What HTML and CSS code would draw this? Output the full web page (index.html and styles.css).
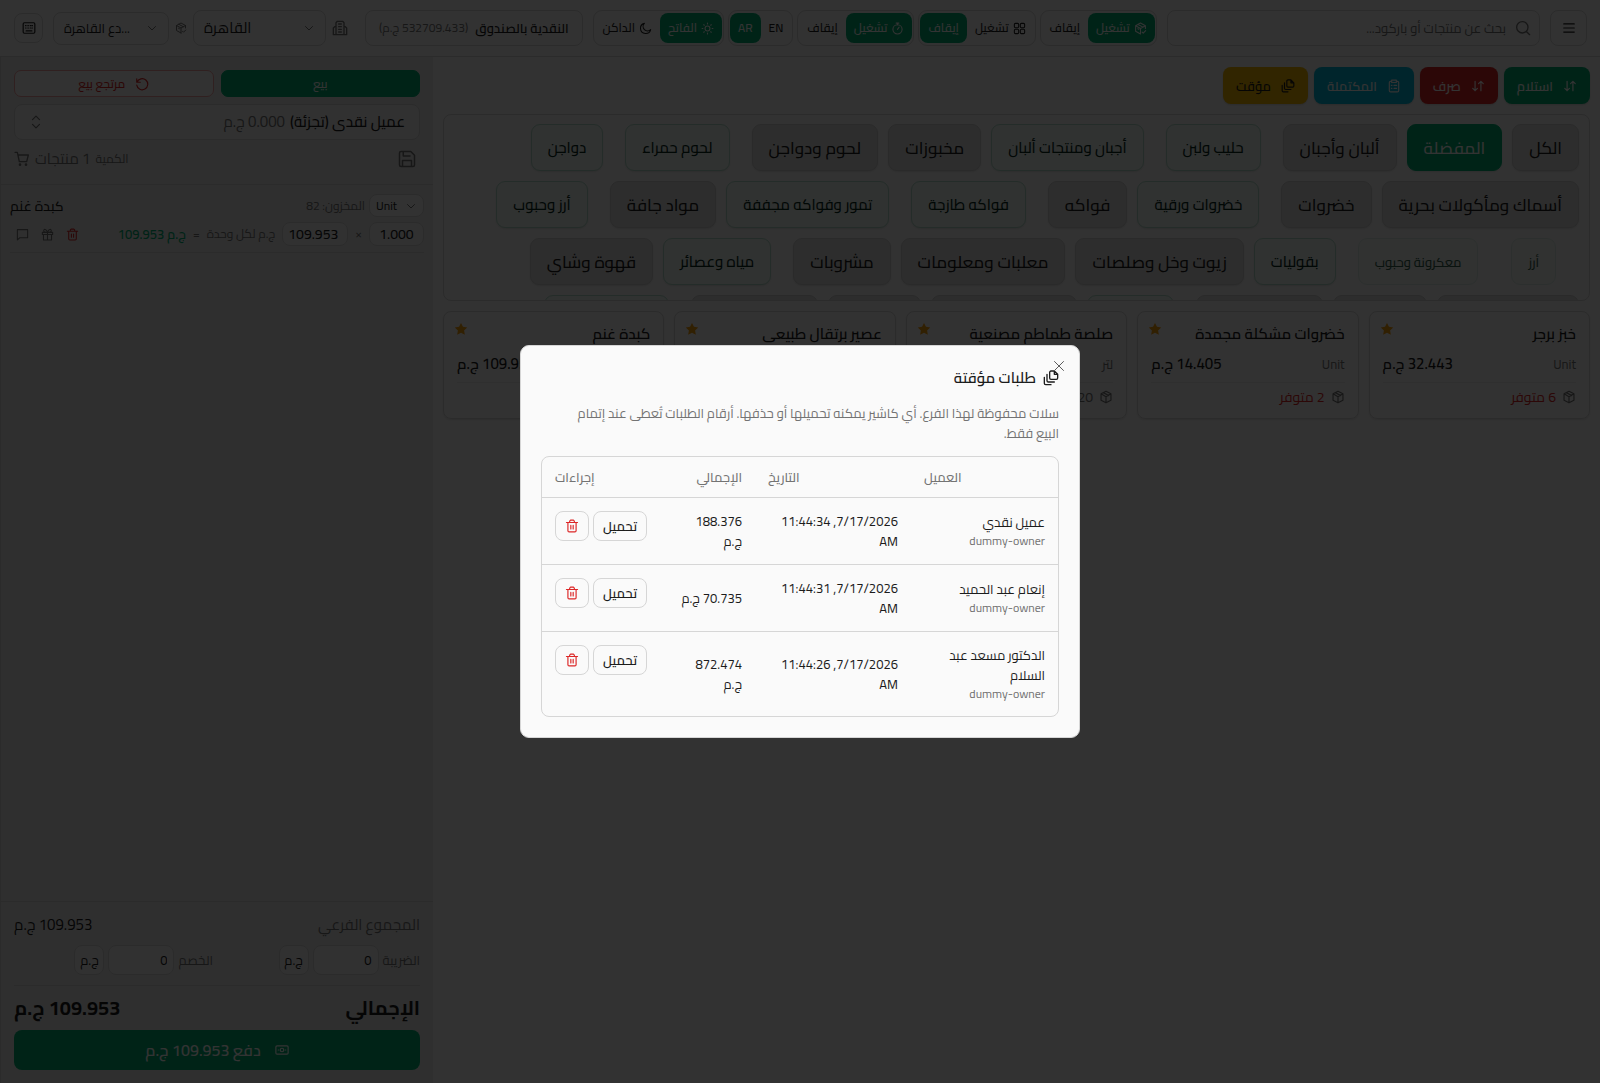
FILE: index.html
```
<!DOCTYPE html>
<html lang="ar" dir="rtl">
<head>
  <meta charset="UTF-8">
  <meta name="viewport" content="width=device-width, initial-scale=1.0">
  <title>نقطة البيع</title>
  <link rel="stylesheet" href="styles.css">
</head>
<body>
  <!-- Icon sprite -->
  <svg class="sprite" aria-hidden="true">
    <symbol id="i-menu" viewBox="0 0 24 24"><path d="M3 5h18M3 12h18M3 19h18"/></symbol>
    <symbol id="i-search" viewBox="0 0 24 24"><circle cx="11" cy="11" r="8.5"/><path d="m17.5 17.5 4.5 4.5"/></symbol>
    <symbol id="i-box" viewBox="0 0 24 24"><path d="M12 2 20.5 6.5v11L12 22l-8.500-4.500v-11zM3.500 6.500 12 11.500l8.500-5M12 11.500V22M7.500 4.500l9 5"/></symbol>
    <symbol id="i-box-check" viewBox="0 0 24 24"><path d="M21 12V7l-9-5-9 5v10l9 5M3 7l9 5 9-5M12 12v10M7.500 4.500l9 5M7 12.500l2 1M15 18.500l2 2 4.500-4.500"/></symbol>
    <symbol id="i-grid" viewBox="0 0 24 24"><rect x="2.500" y="2.500" width="8" height="8" rx="2"/><rect x="13.500" y="2.500" width="8" height="8" rx="2"/><rect x="2.500" y="13.500" width="8" height="8" rx="2"/><rect x="13.500" y="13.500" width="8" height="8" rx="2"/></symbol>
    <symbol id="i-timer" viewBox="0 0 24 24"><circle cx="12" cy="13.500" r="8.500"/><path d="M9.500 2h5M12 2v3M12 13.500l3-4"/></symbol>
    <symbol id="i-sun" viewBox="0 0 24 24"><circle cx="12" cy="12" r="4.500"/><path d="M12 2v1.500M12 20.500V22M2 12h1.500M20.500 12H22M5 5l1 1M18 18l1 1M19 5l-1 1M6 18l-1 1"/></symbol>
    <symbol id="i-moon" viewBox="0 0 24 24"><path d="M21.500 14A9.500 9.500 0 1 1 10 2.500 7.500 7.500 0 0 0 21.500 14z"/></symbol>
    <symbol id="i-building" viewBox="0 0 24 24"><path d="M6 22V4l2-2h8l2 2v18M2 22h20M6 10H4l-2 2v10M18 10h2l2 2v10M10 6h4M10 10h4M10 14h4M10 18h4"/></symbol>
    <symbol id="i-keyboard" viewBox="0 0 24 24"><rect x="2" y="3" width="20" height="18" rx="2"/><path d="M6 8h1M10 8h1M14 8h1M17 8h1M6 12h1M10 12h1M14 12h1M17 12h1M7 17h10"/></symbol>
    <symbol id="i-down" viewBox="0 0 24 24"><path d="m5 9 7 7 7-7"/></symbol>
    <symbol id="i-updown" viewBox="0 0 24 24"><path d="m6 8 6-6 6 6M6 16l6 6 6-6"/></symbol>
    <symbol id="i-arrows" viewBox="0 0 24 24"><path d="M7 4v16M3 16l4 4 4-4M17 20V4M13 8l4-4 4 4"/></symbol>
    <symbol id="i-clipboard" viewBox="0 0 24 24"><path d="M8 4H6a2 2 0 0 0-2 2v14a2 2 0 0 0 2 2h12a2 2 0 0 0 2-2V6a2 2 0 0 0-2-2h-2M8 2h8v4H8zM12 11h4.500M12 16h4.500M7.500 11h1M7.500 16h1"/></symbol>
    <symbol id="i-files" viewBox="0 0 24 24"><path d="M17 1.500h-5a2 2 0 0 0-2 2V12a2 2 0 0 0 2 2h8a2 2 0 0 0 2-2V6.500zM17 1.500v5h5M6 6.500V16a2 2 0 0 0 2 2h9M2 11v9a2 2 0 0 0 2 2h8"/></symbol>
    <symbol id="i-undo" viewBox="0 0 24 24"><path d="M3 3v6h6M3.500 9A9.500 9.500 0 1 1 3 14"/></symbol>
    <symbol id="i-save" viewBox="0 0 24 24"><path d="M4 2h13l5 5v13a2 2 0 0 1-2 2H4a2 2 0 0 1-2-2V4a2 2 0 0 1 2-2zM7 2v6h9M6 22v-8h12v8"/></symbol>
    <symbol id="i-cart" viewBox="0 0 24 24"><path d="M1.500 2H5l3 14h11l2.500-10H6"/><circle cx="9" cy="20.500" r="1"/><circle cx="18" cy="20.500" r="1"/></symbol>
    <symbol id="i-trash" viewBox="0 0 24 24"><path d="M2.500 6h19M5 6v14a2 2 0 0 0 2 2h10a2 2 0 0 0 2-2V6M8 6V3.500L9.500 2h5L16 3.500V6M10 11v6M14 11v6"/></symbol>
    <symbol id="i-gift" viewBox="0 0 24 24"><path d="M2.500 8h19v4h-19zM4.500 12v10h15V12M12 8v14M12 8C10 2 5 1 5 5c0 2 2 3 7 3M12 8c2-6 7-7 7-3 0 2-2 3-7 3"/></symbol>
    <symbol id="i-note" viewBox="0 0 24 24"><path d="M2.500 3h19v15H7l-4.500 4z"/></symbol>
    <symbol id="i-cash" viewBox="0 0 24 24"><rect x="1.500" y="5" width="21" height="14" rx="2"/><circle cx="12" cy="12" r="3"/><path d="M5.500 12h1M17.500 12h1"/></symbol>
    <symbol id="i-star" viewBox="0 0 24 24"><path d="m12 1.500 3.300 6.700 7.400 1.100-5.400 5.200 1.300 7.400-6.600-3.500-6.600 3.500 1.300-7.400L1.300 9.300l7.400-1.100z"/></symbol>
    <symbol id="i-close" viewBox="0 0 24 24"><path d="m3 3 18 18M21 3 3 21"/></symbol>
  </svg>

  <div class="app">
    <header class="topbar">
      <button class="icon-btn" type="button" aria-label="القائمة"><svg class="icon"><use href="#i-menu"/></svg></button>
      <label class="search">
        <svg class="icon icon-lg"><use href="#i-search"/></svg>
        <input type="search" aria-label="بحث" placeholder="بحث عن منتجات أو باركود...">
      </label>
      <div class="toggles">
        <div class="toggle">
          <button class="on" type="button"><svg class="icon"><use href="#i-box-check"/></svg>تشغيل</button>
          <button type="button">إيقاف</button>
        </div>
        <div class="toggle">
          <button type="button"><svg class="icon"><use href="#i-grid"/></svg>تشغيل</button>
          <button class="on" type="button">إيقاف</button>
        </div>
        <div class="toggle">
          <button class="on" type="button"><svg class="icon"><use href="#i-timer"/></svg>تشغيل</button>
          <button type="button">إيقاف</button>
        </div>
        <div class="toggle">
          <button type="button">EN</button>
          <button class="on" type="button">AR</button>
        </div>
        <div class="toggle">
          <button class="on" type="button"><svg class="icon"><use href="#i-sun"/></svg>الفاتح</button>
          <button type="button"><svg class="icon"><use href="#i-moon"/></svg>الداكن</button>
        </div>
      </div>
      <div class="cash"><strong>النقدية بالصندوق</strong><span>(532709.433 ج.م)</span></div>
      <div class="places">
        <svg class="icon icon-lg"><use href="#i-building"/></svg>
        <div class="select branch" dir="ltr">
          <select aria-label="الفرع"><option>القاهرة</option></select>
          <svg class="icon icon-sm"><use href="#i-down"/></svg>
        </div>
        <svg class="icon icon-sm"><use href="#i-box-check"/></svg>
        <div class="select store" dir="ltr">
          <select aria-label="المستودع"><option>&rlm;...دع القاهرة</option></select>
          <svg class="icon icon-sm"><use href="#i-down"/></svg>
        </div>
      </div>
      <button class="icon-btn small" type="button" aria-label="لوحة المفاتيح"><svg class="icon"><use href="#i-keyboard"/></svg></button>
    </header>

    <div class="workspace">
      <main class="catalog">
        <div class="actions">
          <button class="action green" type="button"><svg class="icon"><use href="#i-arrows"/></svg>استلام</button>
          <button class="action red" type="button"><svg class="icon"><use href="#i-arrows"/></svg>صرف</button>
          <button class="action cyan" type="button"><svg class="icon"><use href="#i-clipboard"/></svg>المكتملة</button>
          <button class="action yellow" type="button"><svg class="icon"><use href="#i-files"/></svg>مؤقت</button>
        </div>

        <div class="categories">
          <button class="chip" type="button">الكل</button>
          <button class="chip active" type="button">المفضلة</button>
          <button class="chip" type="button">ألبان وأجبان</button>
          <button class="chip sub" type="button">حليب ولبن</button>
          <button class="chip sub" type="button">أجبان ومنتجات ألبان</button>
          <button class="chip" type="button">مخبوزات</button>
          <button class="chip" type="button">لحوم ودواجن</button>
          <button class="chip sub" type="button">لحوم حمراء</button>
          <button class="chip sub" type="button">دواجن</button>
          <button class="chip" type="button">أسماك ومأكولات بحرية</button>
          <button class="chip" type="button">خضروات</button>
          <button class="chip sub" type="button">خضروات ورقية</button>
          <button class="chip" type="button">فواكه</button>
          <button class="chip sub" type="button">فواكه طازجة</button>
          <button class="chip sub" type="button">تمور وفواكه مجففة</button>
          <button class="chip" type="button">مواد جافة</button>
          <button class="chip sub" type="button">أرز وحبوب</button>
          <button class="chip leaf" type="button">أرز</button>
          <button class="chip leaf" type="button">معكرونة وحبوب</button>
          <button class="chip sub" type="button">بقوليات</button>
          <button class="chip" type="button">زيوت وخل وصلصات</button>
          <button class="chip" type="button">معلبات ومعلومات</button>
          <button class="chip" type="button">مشروبات</button>
          <button class="chip sub" type="button">مياه وعصائر</button>
          <button class="chip" type="button">قهوة وشاي</button>
          <button class="chip" type="button">حلويات وسكاكر</button>
          <button class="chip" type="button">مكسرات</button>
          <button class="chip" type="button">بهارات وتوابل</button>
          <button class="chip sub" type="button">مجمدات</button>
          <button class="chip" type="button">خضروات مجمدة</button>
          <button class="chip" type="button">منظفات</button>
          <button class="chip" type="button">عناية شخصية</button>
          <button class="chip sub" type="button">شامبو وصابون</button>
        </div>

        <div class="products">
          <article class="product">
            <svg class="star"><use href="#i-star"/></svg>
            <h3>خبز برجر</h3>
            <div class="price"><span>Unit</span><strong>32.443 ج.م</strong></div>
            <div class="stock low"><svg class="icon"><use href="#i-box"/></svg>6 متوفر</div>
          </article>
          <article class="product">
            <svg class="star"><use href="#i-star"/></svg>
            <h3>خضروات مشكلة مجمدة</h3>
            <div class="price"><span>Unit</span><strong>14.405 ج.م</strong></div>
            <div class="stock low"><svg class="icon"><use href="#i-box"/></svg>2 متوفر</div>
          </article>
          <article class="product">
            <svg class="star"><use href="#i-star"/></svg>
            <h3>صلصة طماطم مصنعية</h3>
            <div class="price"><span>لتر</span><strong>18.250 ج.م</strong></div>
            <div class="stock"><svg class="icon"><use href="#i-box"/></svg>20 متوفر</div>
          </article>
          <article class="product">
            <svg class="star"><use href="#i-star"/></svg>
            <h3>عصير برتقال طبيعى</h3>
            <div class="price"><span>لتر</span><strong>24.100 ج.م</strong></div>
            <div class="stock"><svg class="icon"><use href="#i-box"/></svg>35 متوفر</div>
          </article>
          <article class="product">
            <svg class="star"><use href="#i-star"/></svg>
            <h3>كبدة غنم</h3>
            <div class="price"><span>Unit</span><strong>109.953 ج.م</strong></div>
            <div class="stock"><svg class="icon"><use href="#i-box"/></svg>82 متوفر</div>
          </article>
        </div>
      </main>

      <aside class="cart">
        <div class="cart-head">
          <div class="modes">
            <button class="mode sale" type="button">بيع</button>
            <button class="mode refund" type="button"><svg class="icon"><use href="#i-undo"/></svg>مرتجع بيع</button>
          </div>
          <button class="customer" type="button">
            <span>عميل نقدى (تجزئة)</span><span class="muted">0.000 ج.م</span>
            <svg class="icon"><use href="#i-updown"/></svg>
          </button>
          <div class="cart-info">
            <button class="plain" type="button" aria-label="حفظ"><svg class="icon icon-xl"><use href="#i-save"/></svg></button>
            <div class="count"><small>الكمية</small><span>1 منتجات</span><svg class="icon icon-lg"><use href="#i-cart"/></svg></div>
          </div>
        </div>

        <div class="lines">
          <div class="line">
            <div class="line-top">
              <div class="select unit" dir="ltr">
                <select aria-label="الوحدة"><option>Unit</option></select>
                <svg class="icon icon-sm"><use href="#i-down"/></svg>
              </div>
              <span class="muted">المخزون: 82</span>
              <strong>كبدة غنم</strong>
            </div>
            <div class="line-bottom">
              <input class="qty" type="text" value="1.000" aria-label="الكمية">
              <span>×</span>
              <input class="unit-price" type="text" dir="ltr" value="109.953" aria-label="سعر الوحدة">
              <span>ج.م لكل وحدة</span>
              <span>=</span>
              <span class="line-total">ج.م 109.953</span>
              <div class="line-tools">
                <button class="plain danger" type="button" aria-label="حذف"><svg class="icon"><use href="#i-trash"/></svg></button>
                <button class="plain" type="button" aria-label="هدية"><svg class="icon"><use href="#i-gift"/></svg></button>
                <button class="plain" type="button" aria-label="ملاحظة"><svg class="icon"><use href="#i-note"/></svg></button>
              </div>
            </div>
          </div>
        </div>

        <div class="summary">
          <div class="subtotal"><span class="muted">المجموع الفرعي</span><span>109.953 ج.م</span></div>
          <div class="adjust">
            <div class="field">
              <label for="tax">الضريبة</label>
              <input id="tax" type="text" dir="ltr" value="0">
              <button type="button">ج.م</button>
            </div>
            <div class="field">
              <label for="discount">الخصم</label>
              <input id="discount" type="text" dir="ltr" value="0">
              <button type="button">ج.م</button>
            </div>
          </div>
          <div class="total"><span>الإجمالي</span><span>109.953 ج.م</span></div>
          <button class="pay" type="button"><svg class="icon"><use href="#i-cash"/></svg>دفع 109.953 ج.م</button>
        </div>
      </aside>
    </div>
  </div>

  <div class="overlay">
    <div class="dialog" role="dialog" aria-modal="true" aria-labelledby="dialog-title">
      <button class="close" type="button" aria-label="إغلاق"><svg class="icon icon-sm"><use href="#i-close"/></svg></button>
      <h2 id="dialog-title"><svg class="icon icon-lg"><use href="#i-files"/></svg>طلبات مؤقتة</h2>
      <p>سلات محفوظة لهذا الفرع. أي كاشير يمكنه تحميلها أو حذفها. أرقام الطلبات تُعطى عند إتمام البيع فقط.</p>
      <div class="table-box">
        <table>
          <thead>
            <tr>
              <th class="col-customer">العميل</th>
              <th class="col-date">التاريخ</th>
              <th class="col-total">الإجمالي</th>
              <th class="col-actions">إجراءات</th>
            </tr>
          </thead>
          <tbody>
            <tr>
              <td>عميل نقدي<small>dummy-owner</small></td>
              <td>7/17/2026, 11:44:34 AM</td>
              <td>188.376 ج.م</td>
              <td class="row-actions">
                <div>
                  <button type="button">تحميل</button>
                  <button class="danger" type="button" aria-label="حذف"><svg class="icon"><use href="#i-trash"/></svg></button>
                </div>
              </td>
            </tr>
            <tr>
              <td>إنعام عبد الحميد<small>dummy-owner</small></td>
              <td>7/17/2026, 11:44:31 AM</td>
              <td>70.735 ج.م</td>
              <td class="row-actions">
                <div>
                  <button type="button">تحميل</button>
                  <button class="danger" type="button" aria-label="حذف"><svg class="icon"><use href="#i-trash"/></svg></button>
                </div>
              </td>
            </tr>
            <tr>
              <td>الدكتور مسعد عبد السلام<small>dummy-owner</small></td>
              <td>7/17/2026, 11:44:26 AM</td>
              <td>872.474 ج.م</td>
              <td class="row-actions">
                <div>
                  <button type="button">تحميل</button>
                  <button class="danger" type="button" aria-label="حذف"><svg class="icon"><use href="#i-trash"/></svg></button>
                </div>
              </td>
            </tr>
          </tbody>
        </table>
      </div>
    </div>
  </div>
</body>
</html>
```
FILE: styles.css
```
:root {
  --bg: #fafafa;
  --panel: #ebebeb;
  --border: #d6d6d6;
  --text: #1c1c1c;
  --muted: #737373;
  --green: #00b074;
  --red: #dc2626;
}

* {
  box-sizing: border-box;
}

body {
  margin: 0;
  background: var(--bg);
  color: var(--text);
  font-family: Cairo, "DejaVu Sans", sans-serif;
  font-size: 13px;
  line-height: 20px;
}

button, input, select {
  font: inherit;
  color: inherit;
  margin: 0;
}

button {
  display: inline-flex;
  align-items: center;
  justify-content: center;
  padding: 0;
  white-space: nowrap;
}

h2, h3, p {
  margin: 0;
}

.sprite {
  display: none;
}

.icon {
  width: 14px;
  height: 14px;
  flex: none;
  fill: none;
  stroke: currentColor;
  stroke-width: 2;
  stroke-linecap: round;
  stroke-linejoin: round;
}

.icon-sm {
  width: 12px;
  height: 12px;
}

.icon-lg {
  width: 16px;
  height: 16px;
}

.icon-xl {
  width: 18px;
  height: 18px;
}

.muted {
  color: var(--muted);
}

.plain {
  border: 0;
  background: none;
}

.danger {
  color: var(--red);
}

.app {
  display: flex;
  flex-direction: column;
  height: 100vh;
}

/* Top bar */
.topbar {
  display: flex;
  align-items: center;
  gap: 10px;
  padding: 10px 13px 10px 14px;
  border-bottom: 1px solid var(--border);
}

.icon-btn {
  width: 37px;
  height: 36px;
  border: 1px solid var(--border);
  border-radius: 8px;
  background: var(--bg);
}

.icon-btn.small {
  width: 29px;
  height: 30px;
}

.search {
  flex: 1;
  display: flex;
  align-items: center;
  gap: 7px;
  min-width: 0;
  height: 36px;
  padding: 0 8px;
  border: 1px solid var(--border);
  border-radius: 8px;
  background: var(--bg);
  color: var(--muted);
}

.search input {
  flex: 1;
  min-width: 0;
  border: 0;
  background: none;
  outline: 0;
}

.search input::placeholder {
  color: var(--muted);
}

.toggles {
  display: flex;
  gap: 4px;
}

.toggle {
  display: flex;
  height: 36px;
  padding: 2px 1px;
  border: 1px solid var(--border);
  border-radius: 9px;
}

.toggle button {
  gap: 4px;
  padding: 0 8px;
  border: 0;
  border-radius: 8px;
  background: none;
  font-size: 12px;
  font-weight: 500;
}

.toggle button.on {
  background: var(--green);
  color: #fff;
}

.toggle .icon {
  width: 13px;
  height: 13px;
}

.cash {
  display: flex;
  align-items: center;
  gap: 7px;
  height: 36px;
  padding: 0 13px;
  border: 1px solid var(--border);
  border-radius: 8px;
  white-space: nowrap;
}

.cash strong {
  font-weight: 600;
}

.cash span {
  color: var(--muted);
  font-size: 12px;
}

.places {
  display: flex;
  align-items: center;
  gap: 6px;
  padding-right: 7px;
  color: var(--muted);
}

.select {
  display: flex;
  align-items: center;
  height: 36px;
  padding: 0 10px;
  border: 1px solid var(--border);
  border-radius: 8px;
  background: var(--bg);
  color: var(--muted);
}

.select select {
  flex: 1;
  min-width: 0;
  appearance: none;
  border: 0;
  background: none;
  color: var(--text);
}

.select.branch {
  width: 133px;
  font-size: 15px;
}

.select.store {
  width: 116px;
  height: 33px;
}

/* Main area */
.workspace {
  flex: 1;
  display: flex;
  min-height: 0;
}

.catalog {
  flex: 1;
  min-width: 0;
  display: flex;
  flex-direction: column;
  gap: 10px;
  padding: 10px;
}

.actions {
  display: flex;
  gap: 6px;
}

.action {
  gap: 10px;
  height: 37px;
  padding: 0 13px;
  border: 0;
  border-radius: 8px;
  box-shadow: 0 1px 2px rgba(0, 0, 0, 0.15);
  color: #fff;
  font-weight: 600;
}

.action.green {
  background: var(--green);
}

.action.red {
  background: var(--red);
}

.action.cyan {
  background: #00b8db;
}

.action.yellow {
  background: #f5b800;
  color: var(--text);
}

.categories {
  display: flex;
  flex-wrap: wrap;
  align-content: flex-start;
  gap: 10px;
  height: 187px;
  padding: 9px 10px;
  border: 1px solid var(--border);
  border-radius: 8px;
  overflow: hidden;
}

.chip {
  height: 47px;
  padding: 0 16px;
  border: 1px solid #d0d0d0;
  border-radius: 9px;
  background: #e2e2e2;
  box-shadow: 0 1px 2px rgba(0, 0, 0, 0.1);
  font-size: 17px;
  font-weight: 500;
}

.chip.active {
  border-color: var(--green);
  background: var(--green);
  color: #fff;
}

.chip.sub {
  margin-right: 12px;
  border-color: #b4dccb;
  background: #eef8f3;
  color: #08291d;
  font-size: 15px;
}

.chip.leaf {
  margin-right: 23px;
  border-color: #dcece5;
  background: #f2f7f5;
  box-shadow: none;
  color: #335f4d;
  font-size: 13px;
}

.products {
  display: grid;
  grid-template-columns: repeat(5, 1fr);
  gap: 10px;
}

.product {
  position: relative;
  padding: 11px 13px;
  border: 1px solid var(--border);
  border-radius: 8px;
  box-shadow: 0 1px 2px rgba(0, 0, 0, 0.1);
}

.product h3 {
  font-size: 15px;
  font-weight: 600;
  line-height: 22px;
}

.star {
  position: absolute;
  top: 10px;
  left: 10px;
  width: 14px;
  height: 14px;
  fill: #f59e0b;
}

.price {
  display: flex;
  justify-content: space-between;
  padding: 9px 0 8px;
  border-bottom: 1px solid #eaeaea;
}

.price span {
  color: var(--muted);
}

.price strong {
  font-size: 15px;
  font-weight: 600;
}

.stock {
  display: flex;
  align-items: center;
  gap: 6px;
  padding-top: 4px;
  color: var(--muted);
  font-size: 14px;
}

.stock.low {
  color: var(--red);
}

.stock .icon {
  color: var(--muted);
}

/* Cart */
.cart {
  display: flex;
  flex-direction: column;
  width: 433px;
  border-left: 1px solid var(--border);
  background: var(--panel);
}

.cart-head {
  display: flex;
  flex-direction: column;
  gap: 7px;
  padding: 13px;
  border-bottom: 1px solid var(--border);
}

.modes {
  display: flex;
  gap: 7px;
}

.mode {
  flex: 1;
  gap: 10px;
  height: 27px;
  border: 1px solid var(--green);
  border-radius: 7px;
  font-size: 12px;
  font-weight: 500;
}

.mode.sale {
  background: var(--green);
  color: #fff;
}

.mode.refund {
  border-color: #f0a0a0;
  background: var(--bg);
  color: var(--red);
}

.customer {
  justify-content: flex-start;
  gap: 5px;
  height: 36px;
  padding: 0 14px;
  border: 1px solid var(--border);
  border-radius: 8px;
  background: #f4f4f4;
  font-size: 15px;
  font-weight: 500;
}

.customer .muted {
  font-weight: 400;
}

.customer .icon {
  margin-right: auto;
  color: var(--muted);
}

.cart-info {
  display: flex;
  align-items: center;
  justify-content: space-between;
  height: 24px;
  padding: 0 4px 0 0;
  color: var(--muted);
}

.count {
  display: flex;
  align-items: center;
  gap: 5px;
  font-size: 15px;
}

.count small {
  font-size: 12px;
}

.lines {
  flex: 1;
  padding: 9px;
}

.line {
  display: flex;
  flex-direction: column;
  gap: 5px;
  padding-bottom: 6px;
  border-bottom: 1px solid var(--border);
}

.line-top,
.line-bottom {
  display: flex;
  align-items: center;
  font-size: 12px;
}

.line-top {
  gap: 4px;
}

.line-top strong {
  margin-right: auto;
  font-size: 14px;
  font-weight: 500;
}

.select.unit {
  width: 55px;
  height: 23px;
  padding: 0 6px;
}

.line-bottom {
  gap: 7px;
  color: var(--muted);
}

.line-bottom input {
  height: 24px;
  padding: 0 5px;
  border: 1px solid var(--border);
  border-radius: 8px;
  background: #f4f4f4;
  color: var(--text);
  font-size: 14px;
  font-weight: 500;
}

.qty {
  width: 55px;
  text-align: center;
}

.unit-price {
  width: 66px;
}

.line-total {
  color: var(--green);
  font-size: 13px;
  font-weight: 600;
}

.line-tools {
  display: flex;
  gap: 12px;
  margin-right: auto;
  padding-left: 6px;
}

.line-tools .icon {
  width: 13px;
  height: 13px;
}

.summary {
  padding: 13px;
  border-top: 1px solid var(--border);
}

.subtotal,
.total {
  display: flex;
  justify-content: space-between;
}

.subtotal {
  font-size: 15px;
}

.adjust {
  display: grid;
  grid-template-columns: 1fr 1fr;
  gap: 8px;
  padding: 10px 0;
  border-bottom: 1px solid var(--border);
}

.field {
  display: flex;
  align-items: center;
  gap: 4px;
}

.field label {
  color: var(--muted);
}

.field input,
.field button {
  height: 30px;
  border: 1px solid var(--border);
  border-radius: 8px;
  background: #f4f4f4;
}

.field input {
  width: 66px;
  padding: 0 6px;
  text-align: right;
}

.field button {
  width: 30px;
}

.total {
  padding: 7px 0;
  font-size: 20px;
  font-weight: 700;
  line-height: 30px;
}

.pay {
  width: 100%;
  gap: 14px;
  height: 40px;
  border: 0;
  border-radius: 8px;
  background: var(--green);
  color: #fff;
  font-size: 16px;
  font-weight: 600;
}

/* Held orders dialog */
.overlay {
  position: fixed;
  inset: 0;
  display: flex;
  align-items: center;
  justify-content: center;
  background: rgba(0, 0, 0, 0.8);
}

.dialog {
  position: relative;
  display: flex;
  flex-direction: column;
  gap: 13px;
  width: 560px;
  padding: 20px;
  border: 1px solid var(--border);
  border-radius: 9px;
  background: var(--bg);
}

.close {
  position: absolute;
  top: 14px;
  right: 14px;
  border: 0;
  background: none;
  color: #5c5c5c;
}

.dialog h2 {
  display: flex;
  align-items: center;
  gap: 7px;
  font-size: 15px;
  font-weight: 600;
  line-height: 24px;
}

.dialog p {
  padding-left: 20px;
  color: var(--muted);
}

.table-box {
  border: 1px solid var(--border);
  border-radius: 8px;
}

table {
  width: 100%;
  border-collapse: collapse;
  table-layout: fixed;
}

th, td {
  padding: 13px;
  text-align: right;
}

th {
  height: 40px;
  padding: 0 13px;
  color: var(--muted);
  font-weight: 500;
}

tbody tr {
  border-top: 1px solid var(--border);
}

td small {
  display: block;
  color: var(--muted);
  font-size: 12px;
  line-height: 18px;
}

.col-customer {
  width: 147px;
  text-align: left;
}

.col-date {
  width: 156px;
  text-align: left;
}

.col-total {
  width: 92px;
}

.col-actions {
  text-align: left;
}

.row-actions {
  vertical-align: top;
}

.row-actions div {
  display: flex;
  justify-content: flex-end;
  gap: 4px;
}

.row-actions button {
  height: 30px;
  padding: 0 9px;
  border: 1px solid var(--border);
  border-radius: 8px;
  background: var(--bg);
  font-weight: 600;
}
```
